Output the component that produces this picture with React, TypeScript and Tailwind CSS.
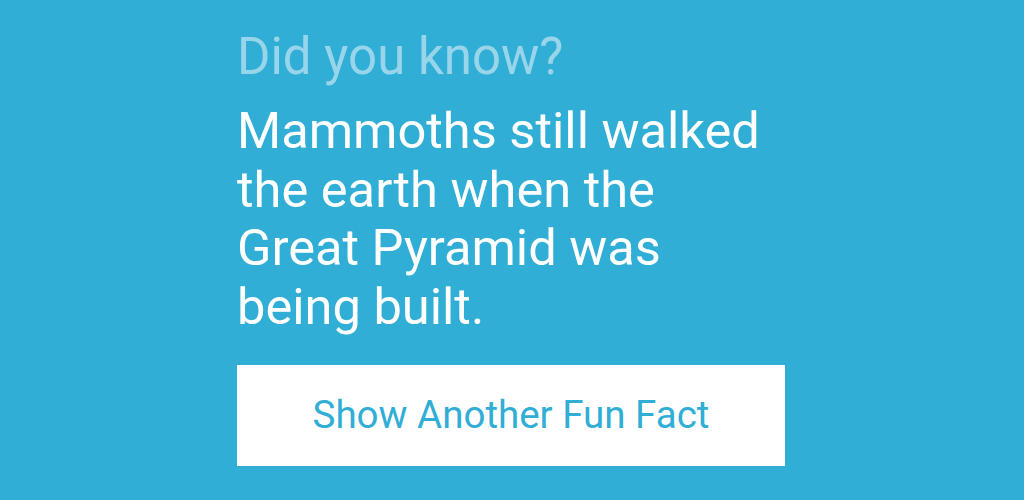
export default function App() {
  return (
    <div className="w-[1024px] h-[500px] bg-[#30aed5] flex pl-[237px]" style={{ fontFamily: "Roboto, sans-serif" }}>
      <div className="w-[548px] pt-[27px] flex flex-col">
        <div className="text-[51px] leading-[59px] text-[#98d5ea]">Did you know?</div>
        <div className="text-[50.6px] leading-[58.7px] text-white mt-[16px]">
          Mammoths still walked the earth when the Great Pyramid was being built.
        </div>
        <button className="mt-[28px] h-[101px] w-[548px] bg-white text-[#30aed5] text-[38.5px] flex items-center justify-center">
          Show Another Fun Fact
        </button>
      </div>
    </div>
  );
}
